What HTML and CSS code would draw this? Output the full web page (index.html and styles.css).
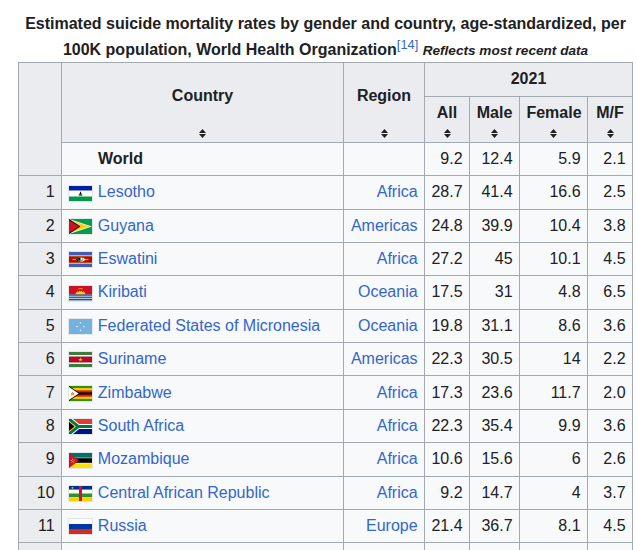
FILE: index.html
```html
<!DOCTYPE html>
<html lang="en">
<head>
<meta charset="utf-8">
<title>Suicide mortality rates</title>
<link rel="stylesheet" href="styles.css">
</head>
<body>
<div class="page">
<table class="wikitable">
<caption>Estimated suicide mortality rates by gender and country, age-standardized, per 100K population, World Health Organization<sup class="ref"><a href="#">[14]</a></sup> <i class="note">Reflects most recent data</i></caption>
<colgroup>
<col class="c-rank"><col class="c-country"><col class="c-region"><col class="c-all"><col class="c-male"><col class="c-female"><col class="c-mf">
</colgroup>
<thead>
<tr>
<th rowspan="3" class="rank-head"></th>
<th rowspan="2" class="sortable">Country<svg class="sort" width="7" height="9" viewBox="0 0 7 9"><path d="M0 4 3.5 0 7 4Z M0 5 3.5 9 7 5Z"/></svg></th>
<th rowspan="2" class="sortable">Region<svg class="sort" width="7" height="9" viewBox="0 0 7 9"><path d="M0 4 3.5 0 7 4Z M0 5 3.5 9 7 5Z"/></svg></th>
<th colspan="4">2021</th>
</tr>
<tr>
<th class="sortable">All<svg class="sort" width="7" height="9" viewBox="0 0 7 9"><path d="M0 4 3.5 0 7 4Z M0 5 3.5 9 7 5Z"/></svg></th>
<th class="sortable">Male<svg class="sort" width="7" height="9" viewBox="0 0 7 9"><path d="M0 4 3.5 0 7 4Z M0 5 3.5 9 7 5Z"/></svg></th>
<th class="sortable">Female<svg class="sort" width="7" height="9" viewBox="0 0 7 9"><path d="M0 4 3.5 0 7 4Z M0 5 3.5 9 7 5Z"/></svg></th>
<th class="sortable">M/F<svg class="sort" width="7" height="9" viewBox="0 0 7 9"><path d="M0 4 3.5 0 7 4Z M0 5 3.5 9 7 5Z"/></svg></th>
</tr>
<tr class="world-row">
<td class="world">World</td><td></td><td class="num">9.2</td><td class="num">12.4</td><td class="num">5.9</td><td class="num">2.1</td>
</tr>
</thead>
<tbody>
<tr>
<td class="rank">1</td>
<td><span class="flag"><svg width="23" height="15" viewBox="0 0 23 15"><rect width="23" height="15" fill="#fff"/><rect width="23" height="4.5" fill="#00209f"/><rect y="10.5" width="23" height="4.5" fill="#009a44"/><path d="M11.5 5.3 L10.1 8.7 H12.9 Z M9.7 8.6 H13.3 V9.4 H9.7Z" fill="#000"/></svg></span>&nbsp;<a href="#">Lesotho</a></td>
<td class="region"><a href="#">Africa</a></td><td class="num">28.7</td><td class="num">41.4</td><td class="num">16.6</td><td class="num">2.5</td>
</tr>
<tr>
<td class="rank">2</td>
<td><span class="flag"><svg width="23" height="15" viewBox="0 0 23 15"><rect width="23" height="15" fill="#009e49"/><path d="M0 0 L23 7.5 L0 15Z" fill="#fff"/><path d="M0 0.8 L20.8 7.5 L0 14.2Z" fill="#fcd116"/><path d="M0 0 L11.5 7.5 L0 15Z" fill="#000"/><path d="M0 1 L10 7.5 L0 14Z" fill="#ce1126"/></svg></span>&nbsp;<a href="#">Guyana</a></td>
<td class="region"><a href="#">Americas</a></td><td class="num">24.8</td><td class="num">39.9</td><td class="num">10.4</td><td class="num">3.8</td>
</tr>
<tr>
<td class="rank">3</td>
<td><span class="flag"><svg width="23" height="15" viewBox="0 0 23 15"><rect width="23" height="15" fill="#3e5eb9"/><rect y="3.2" width="23" height="8.6" fill="#ffd900"/><rect y="4.3" width="23" height="6.4" fill="#b10c0c"/><path d="M3.5 7.5 H19.5" stroke="#fff" stroke-width="0.6"/><ellipse cx="11.5" cy="7.5" rx="4.5" ry="2" fill="#fff"/><path d="M11.5 5.5 A4.5 2 0 0 0 11.5 9.5Z" fill="#000"/><circle cx="9" cy="7" r="0.5" fill="#fff"/><circle cx="10" cy="8.2" r="0.5" fill="#fff"/><circle cx="13.8" cy="7" r="0.5" fill="#000"/><circle cx="13" cy="8.2" r="0.5" fill="#000"/></svg></span>&nbsp;<a href="#">Eswatini</a></td>
<td class="region"><a href="#">Africa</a></td><td class="num">27.2</td><td class="num">45</td><td class="num">10.1</td><td class="num">4.5</td>
</tr>
<tr>
<td class="rank">4</td>
<td><span class="flag"><svg width="23" height="15" viewBox="0 0 23 15"><rect width="23" height="15" fill="#fff"/><rect width="23" height="8.5" fill="#ce1126"/><path d="M6.5 8.5 L7 6.3 L8.3 7.1 L8.4 5 L9.8 6.3 L10.5 4.4 L11.5 5.9 L12.5 4.4 L13.2 6.3 L14.6 5 L14.7 7.1 L16 6.3 L16.5 8.5Z" fill="#fcd116"/><path d="M8.8 8.5 A2.7 2.7 0 0 1 14.2 8.5Z" fill="#fcd116"/><path d="M8.5 3.2 Q11.5 1.2 14.5 3.2 Q11.5 2.6 8.5 3.2Z" fill="#fcd116"/><rect y="8.5" width="23" height="1.2" fill="#003f87"/><rect y="10.6" width="23" height="1.2" fill="#003f87"/><rect y="12.7" width="23" height="1.2" fill="#003f87"/><rect y="14.6" width="23" height="0.4" fill="#003f87"/></svg></span>&nbsp;<a href="#">Kiribati</a></td>
<td class="region"><a href="#">Oceania</a></td><td class="num">17.5</td><td class="num">31</td><td class="num">4.8</td><td class="num">6.5</td>
</tr>
<tr>
<td class="rank">5</td>
<td><span class="flag"><svg width="23" height="15" viewBox="0 0 23 15"><rect width="23" height="15" fill="#75b2dd"/><g fill="#fff"><polygon points="0,-1 0.225,-0.309 0.951,-0.309 0.363,0.118 0.588,0.809 0,0.382 -0.588,0.809 -0.363,0.118 -0.951,-0.309 -0.225,-0.309" transform="translate(11.5 3.9) scale(1.2)"/><polygon points="0,-1 0.225,-0.309 0.951,-0.309 0.363,0.118 0.588,0.809 0,0.382 -0.588,0.809 -0.363,0.118 -0.951,-0.309 -0.225,-0.309" transform="translate(8 7.6) scale(1.2)"/><polygon points="0,-1 0.225,-0.309 0.951,-0.309 0.363,0.118 0.588,0.809 0,0.382 -0.588,0.809 -0.363,0.118 -0.951,-0.309 -0.225,-0.309" transform="translate(15 7.6) scale(1.2)"/><polygon points="0,-1 0.225,-0.309 0.951,-0.309 0.363,0.118 0.588,0.809 0,0.382 -0.588,0.809 -0.363,0.118 -0.951,-0.309 -0.225,-0.309" transform="translate(11.5 11.3) scale(1.2)"/></g></svg></span>&nbsp;<a href="#">Federated States of Micronesia</a></td>
<td class="region"><a href="#">Oceania</a></td><td class="num">19.8</td><td class="num">31.1</td><td class="num">8.6</td><td class="num">3.6</td>
</tr>
<tr>
<td class="rank">6</td>
<td><span class="flag"><svg width="23" height="15" viewBox="0 0 23 15"><rect width="23" height="15" fill="#377e3f"/><rect y="3" width="23" height="9" fill="#fff"/><rect y="4.5" width="23" height="6" fill="#b40a2d"/><polygon points="0,-1 0.225,-0.309 0.951,-0.309 0.363,0.118 0.588,0.809 0,0.382 -0.588,0.809 -0.363,0.118 -0.951,-0.309 -0.225,-0.309" transform="translate(11.5 7.7) scale(2.4)" fill="#ecc81d"/></svg></span>&nbsp;<a href="#">Suriname</a></td>
<td class="region"><a href="#">Americas</a></td><td class="num">22.3</td><td class="num">30.5</td><td class="num">14</td><td class="num">2.2</td>
</tr>
<tr>
<td class="rank">7</td>
<td><span class="flag"><svg width="23" height="15" viewBox="0 0 23 15"><rect width="23" height="15" fill="#319208"/><rect y="2.14" width="23" height="10.72" fill="#ffd200"/><rect y="4.29" width="23" height="6.42" fill="#de2010"/><rect y="6.43" width="23" height="2.14" fill="#000"/><path d="M0 0 L11 7.5 L0 15Z" fill="#000"/><path d="M0 0.9 L9.7 7.5 L0 14.1Z" fill="#fff"/><polygon points="0,-1 0.225,-0.309 0.951,-0.309 0.363,0.118 0.588,0.809 0,0.382 -0.588,0.809 -0.363,0.118 -0.951,-0.309 -0.225,-0.309" transform="translate(3.6 7.6) scale(2.2)" fill="#de2010"/><rect x="3.1" y="6.6" width="1.1" height="1.8" fill="#ffd200"/></svg></span>&nbsp;<a href="#">Zimbabwe</a></td>
<td class="region"><a href="#">Africa</a></td><td class="num">17.3</td><td class="num">23.6</td><td class="num">11.7</td><td class="num">2.0</td>
</tr>
<tr>
<td class="rank">8</td>
<td><span class="flag"><svg width="23" height="15" viewBox="0 0 23 15"><rect width="23" height="7.5" fill="#e03c31"/><rect y="7.5" width="23" height="7.5" fill="#001489"/><path d="M-1 -0.8 L9.2 7.5 L24 7.5 M-1 15.8 L9.2 7.5" fill="none" stroke="#fff" stroke-width="5"/><path d="M-1 -0.8 L9.2 7.5 L24 7.5 M-1 15.8 L9.2 7.5" fill="none" stroke="#007749" stroke-width="3"/><path d="M0 1.9 L6.9 7.5 L0 13.1Z" fill="#ffb81c"/><path d="M0 3.1 L5.4 7.5 L0 11.9Z" fill="#000"/></svg></span>&nbsp;<a href="#">South Africa</a></td>
<td class="region"><a href="#">Africa</a></td><td class="num">22.3</td><td class="num">35.4</td><td class="num">9.9</td><td class="num">3.6</td>
</tr>
<tr>
<td class="rank">9</td>
<td><span class="flag"><svg width="23" height="15" viewBox="0 0 23 15"><rect width="23" height="15" fill="#fce100"/><rect width="23" height="10.3" fill="#fff"/><rect width="23" height="4.7" fill="#007168"/><rect y="5.2" width="23" height="4.6" fill="#000"/><path d="M0 0 L10 7.5 L0 15Z" fill="#d21034"/><polygon points="0,-1 0.225,-0.309 0.951,-0.309 0.363,0.118 0.588,0.809 0,0.382 -0.588,0.809 -0.363,0.118 -0.951,-0.309 -0.225,-0.309" transform="translate(3.7 7.8) scale(2.6)" fill="#fce100"/><path d="M2.4 8.6 L5 6.9 M2.6 6.9 L5 8.6" stroke="#000" stroke-width="0.5"/></svg></span>&nbsp;<a href="#">Mozambique</a></td>
<td class="region"><a href="#">Africa</a></td><td class="num">10.6</td><td class="num">15.6</td><td class="num">6</td><td class="num">2.6</td>
</tr>
<tr>
<td class="rank">10</td>
<td><span class="flag"><svg width="23" height="15" viewBox="0 0 23 15"><rect width="23" height="3.75" fill="#003082"/><rect y="3.75" width="23" height="3.75" fill="#fff"/><rect y="7.5" width="23" height="3.75" fill="#289728"/><rect y="11.25" width="23" height="3.75" fill="#ffce00"/><rect x="10" width="3" height="15" fill="#d21034"/><polygon points="0,-1 0.225,-0.309 0.951,-0.309 0.363,0.118 0.588,0.809 0,0.382 -0.588,0.809 -0.363,0.118 -0.951,-0.309 -0.225,-0.309" transform="translate(3.5 2) scale(1.6)" fill="#ffce00"/></svg></span>&nbsp;<a href="#">Central African Republic</a></td>
<td class="region"><a href="#">Africa</a></td><td class="num">9.2</td><td class="num">14.7</td><td class="num">4</td><td class="num">3.7</td>
</tr>
<tr>
<td class="rank">11</td>
<td><span class="flag"><svg width="23" height="15" viewBox="0 0 23 15"><rect width="23" height="5" fill="#fff"/><rect y="5" width="23" height="5" fill="#0039a6"/><rect y="10" width="23" height="5" fill="#d52b1e"/></svg></span>&nbsp;<a href="#">Russia</a></td>
<td class="region"><a href="#">Europe</a></td><td class="num">21.4</td><td class="num">36.7</td><td class="num">8.1</td><td class="num">4.5</td>
</tr>
<tr>
<td class="rank"></td><td></td><td></td><td></td><td></td><td></td><td></td>
</tr>
</tbody>
</table>
</div>
</body>
</html>
```
FILE: styles.css
```css
* {
  box-sizing: border-box;
}

body {
  margin: 0;
  background: #ffffff;
  color: #202122;
  font-family: "Liberation Sans", Arial, sans-serif;
  font-size: 16px;
}

.page {
  padding: 11px 0 0 18px;
}

.wikitable {
  border-collapse: collapse;
  table-layout: fixed;
  width: 614px;
  background: #f8f9fa;
  color: #202122;
  border: 1px solid #a2a9b1;
}

.wikitable caption {
  font-weight: bold;
  text-align: center;
  line-height: 1.6;
}

.ref {
  font-size: 80%;
  font-weight: normal;
  line-height: 1;
  vertical-align: super;
}

.note {
  font-size: 85%;
  font-style: italic;
}

.c-rank { width: 43px; }
.c-country { width: 282px; }
.c-region { width: 81px; }
.c-all { width: 45px; }
.c-male { width: 50px; }
.c-female { width: 68px; }
.c-mf { width: 45px; }

.wikitable th,
.wikitable td {
  border: 1px solid #a2a9b1;
  padding: 3.2px 6.4px;
  line-height: 26px;
  white-space: nowrap;
}

.wikitable th {
  background: #eaecf0;
  font-weight: bold;
  text-align: center;
  vertical-align: middle;
}

.wikitable th.sortable {
  position: relative;
  padding-bottom: 16px;
}

.sort {
  position: absolute;
  left: 50%;
  bottom: 4px;
  margin-left: -3.5px;
  display: block;
  fill: #202122;
}

a {
  color: #3366cc;
  text-decoration: none;
}

.rank {
  background: #eaecf0;
  text-align: right;
}

.num,
.region {
  text-align: right;
}

.world {
  font-weight: bold;
  padding-left: 36px !important;
}

.flag {
  display: inline-block;
  vertical-align: middle;
  border: 1px solid #e2e5e9;
  line-height: 0;
}

.flag svg {
  display: block;
}
```
